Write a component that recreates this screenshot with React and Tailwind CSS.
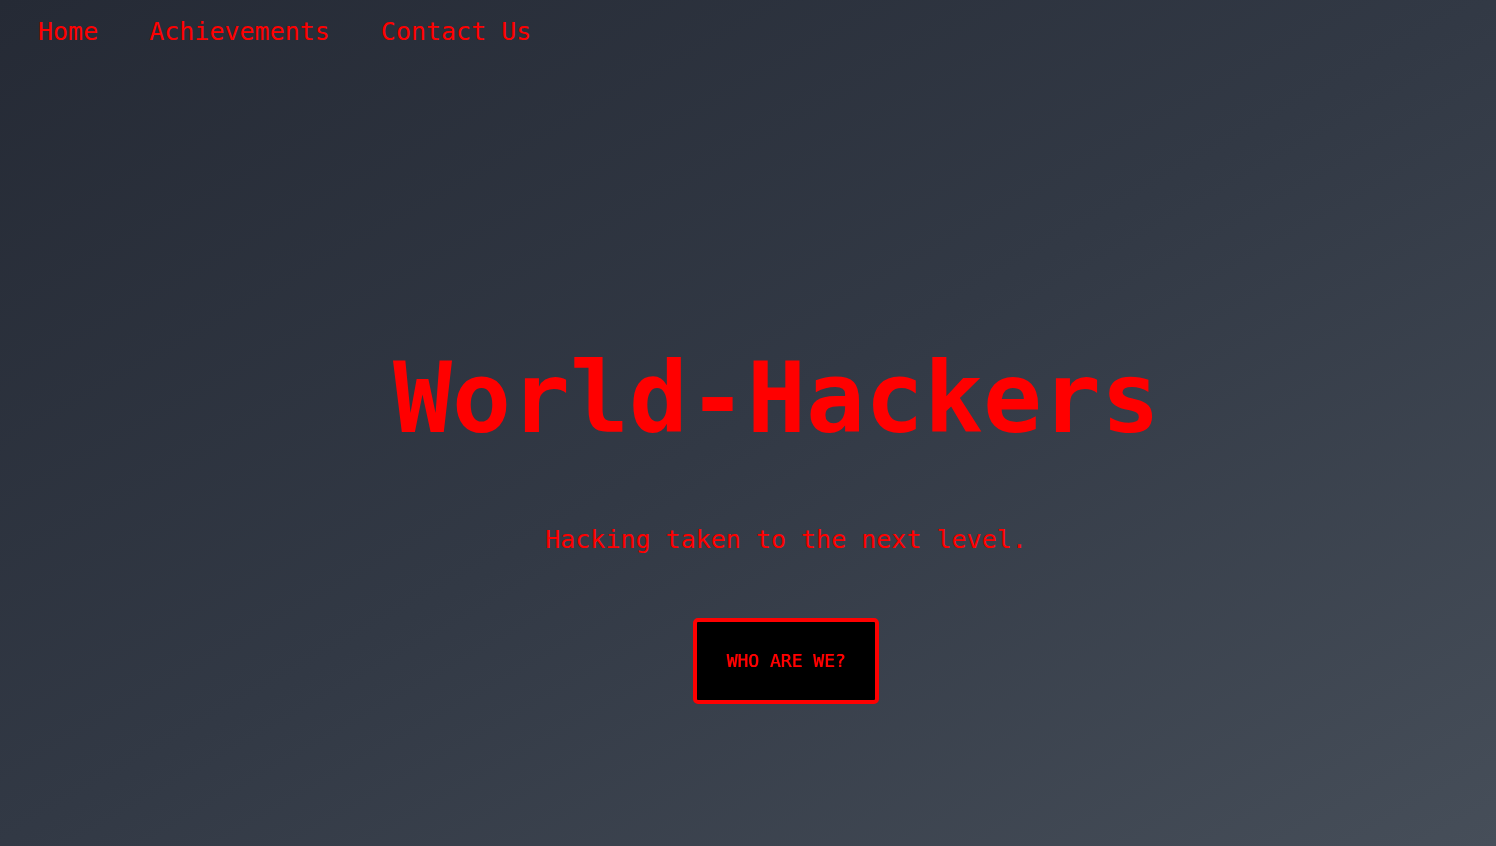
import React from "react";

const mono = { fontFamily: '"DejaVu Sans Mono", "Liberation Mono", monospace' };

const links = ["Home", "Achievements", "Contact Us"];

export default function App() {
  return (
    <div
      className="min-h-screen w-full bg-linear-to-br from-[#252a35] via-[#323945] to-[#464e59] text-[#ff0000] flex flex-col"
      style={mono}
    >
      {/* Nav */}
      <nav className="flex items-center gap-[51px] pl-[38px] pt-[19px]">
        {links.map((l) => (
          <a key={l} href="#" className="text-[25px] leading-none">
            {l}
          </a>
        ))}
      </nav>

      {/* Hero */}
      <section className="flex flex-col items-center pl-[76px] pt-[305px]">
        <h1 className="mr-[19px] text-[98px] font-bold leading-none">World-Hackers</h1>
        <p className="mt-[80px] text-[25px] leading-none">Hacking taken to the next level.</p>
        <button className="mt-[66px] bg-black border-4 border-[#ff0000] rounded-[5px] px-[29px] py-[30px] text-[18px] leading-none [text-shadow:0_0_0.4px_#ff0000]">
          WHO ARE WE?
        </button>
      </section>
    </div>
  );
}
